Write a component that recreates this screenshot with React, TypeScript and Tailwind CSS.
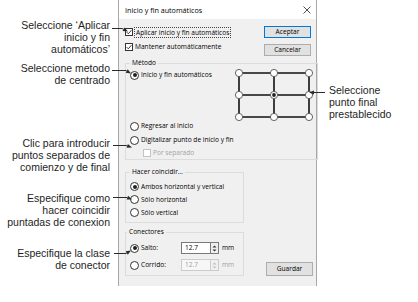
import React from "react";

type Pt = [number, number];

function Leader({ pts }: { pts: Pt[] }) {
  const [x2, y2] = pts[pts.length - 1];
  const [x1, y1] = pts[pts.length - 2];
  const dx = x2 - x1;
  const dy = y2 - y1;
  const len = Math.hypot(dx, dy) || 1;
  const ux = dx / len;
  const uy = dy / len;
  const L = 5;
  const W = 2;
  const bx = x2 - ux * L;
  const by = y2 - uy * L;
  const p1: Pt = [bx - uy * W, by + ux * W];
  const p2: Pt = [bx + uy * W, by - ux * W];
  const linePts: Pt[] = [...pts.slice(0, -1), [bx, by]];
  return (
    <g>
      <polyline
        points={linePts.map((p) => p.join(",")).join(" ")}
        fill="none"
        stroke="#2a2a2a"
        strokeWidth={1}
      />
      <polygon points={`${x2},${y2} ${p1.join(",")} ${p2.join(",")}`} fill="#2a2a2a" />
    </g>
  );
}

function Radio({ checked, disabled }: { checked?: boolean; disabled?: boolean }) {
  return (
    <span
      className={
        disabled
          ? "flex h-[9px] w-[9px] shrink-0 items-center justify-center rounded-full border border-[#bcbcbc] bg-white"
          : "flex h-[9px] w-[9px] shrink-0 items-center justify-center rounded-full border border-[#333333] bg-white"
      }
    >
      {checked && <span className="h-[4px] w-[4px] rounded-full bg-[#222222]" />}
    </span>
  );
}

function Check({ checked, disabled }: { checked?: boolean; disabled?: boolean }) {
  return (
    <span
      className={
        disabled
          ? "flex h-[8px] w-[8px] shrink-0 items-center justify-center border border-[#c4c4c4] bg-white"
          : "flex h-[8px] w-[8px] shrink-0 items-center justify-center border border-[#333333] bg-white"
      }
    >
      {checked && (
        <svg width="6" height="6" viewBox="0 0 6 6">
          <path d="M0.6 3.1 L2.3 4.8 L5.4 1.2" fill="none" stroke="#222" strokeWidth="0.9" />
        </svg>
      )}
    </span>
  );
}

function Spinner({ disabled }: { disabled?: boolean }) {
  const c = disabled ? "#bdbdbd" : "#333";
  return (
    <span
      className={
        disabled
          ? "flex h-[12px] w-[8px] flex-col items-center justify-center gap-[1px] border-y border-r border-[#cccccc] bg-[#f0f0f0]"
          : "flex h-[12px] w-[8px] flex-col items-center justify-center gap-[1px] border-y border-r border-[#7a7a7a] bg-[#f0f0f0]"
      }
    >
      <svg width="5" height="3" viewBox="0 0 5 3">
        <path d="M0.5 2.6 L2.5 0.4 L4.5 2.6 Z" fill={c} />
      </svg>
      <svg width="5" height="3" viewBox="0 0 5 3">
        <path d="M0.5 0.4 L2.5 2.6 L4.5 0.4 Z" fill={c} />
      </svg>
    </span>
  );
}

function Grid() {
  const xs = [5, 40, 75];
  const ys = [5, 27, 49];
  return (
    <svg width="80" height="54" viewBox="0 0 80 54" className="shrink-0">
      {ys.map((y) => (
        <line key={`h${y}`} x1={5} y1={y} x2={75} y2={y} stroke="#111" strokeWidth={1.6} />
      ))}
      {xs.map((x) => (
        <line key={`v${x}`} x1={x} y1={5} x2={x} y2={49} stroke="#111" strokeWidth={1.6} />
      ))}
      {ys.map((y) =>
        xs.map((x) => (
          <circle key={`c${x}-${y}`} cx={x} cy={y} r={3.6} fill="#fff" stroke="#555" strokeWidth={0.9} />
        ))
      )}
      <circle cx={40} cy={27} r={1.9} fill="#222" />
    </svg>
  );
}

export default function App() {
  return (
    <div className="relative flex h-[302px] w-[418px] overflow-hidden bg-white">
      {/* left annotations */}
      <div className="flex w-[118px] shrink-0 flex-col items-end whitespace-nowrap pr-[8px] text-right font-['Liberation_Sans',Arial,sans-serif] text-[10.5px] leading-[12px] text-[#1e1e1e]">
        <p className="mt-[19px]">
          Seleccione ‘Aplicar
          <br />
          inicio y fin
          <br />
          automáticos’
        </p>
        <p className="mt-[7px]">
          Seleccione metodo
          <br />
          de centrado
        </p>
        <p className="mt-[51px]">
          Clic para introducir
          <br />
          puntos separados de
          <br />
          comienzo y de final
        </p>
        <p className="mt-[19px]">
          Especifique como
          <br />
          hacer coincidir
          <br />
          puntadas de conexion
        </p>
        <p className="mt-[19px]">
          Especifique la clase
          <br />
          de conector
        </p>
      </div>

      {/* dialog */}
      <div className="flex h-[286px] w-[199px] shrink-0 flex-col whitespace-nowrap border-x border-[#a8a8a8] font-['Open_Sans','Noto_Sans',sans-serif] text-[6.6px] leading-[10px] text-black">
        <div className="flex h-[19px] shrink-0 items-center justify-between bg-white pl-[6px] pr-[5px]">
          <span className="text-[7.2px]">Inicio y fin automáticos</span>
          <svg width="8" height="8" viewBox="0 0 8 8">
            <path d="M0.5 0.5 L7.5 7.5 M7.5 0.5 L0.5 7.5" stroke="#222" strokeWidth="0.8" />
          </svg>
        </div>
        <div className="flex flex-1 flex-col bg-[#f0f0f0] pl-[6px] pr-[3px]">
          {/* top */}
          <div className="flex h-[39px] shrink-0 justify-between">
            <div className="flex flex-col gap-[3px] pt-[7px]">
              <div className="flex h-[12px] items-center">
                <Check checked />
                <span className="ml-[1px] border border-dotted border-[#444] px-[1px] leading-[9px]">
                  Aplicar inicio y fin automáticos
                </span>
              </div>
              <div className="flex h-[12px] items-center">
                <Check checked />
                <span className="ml-[2px]">Mantener automáticamente</span>
              </div>
            </div>
            <div className="mr-[2px] flex flex-col gap-[6px] pt-[7px]">
              <div className="flex h-[12px] w-[47px] items-center justify-center border border-[#0078d7] bg-[#e1e1e1]">
                Aceptar
              </div>
              <div className="flex h-[12px] w-[47px] items-center justify-center border border-[#adadad] bg-[#e1e1e1]">
                Cancelar
              </div>
            </div>
          </div>

          {/* Método */}
          <fieldset className="border border-[#dcdcdc]">
            <legend className="ml-[4px] px-[2px] leading-[10px]">Método</legend>
            <div className="flex">
              <div className="flex min-w-0 flex-1 flex-col pl-[4px]">
                <div className="flex h-[14px] items-center gap-[2px]">
                  <Radio checked />
                  <span>Inicio y fin automáticos</span>
                </div>
                <div className="mt-[37px] flex h-[14px] items-center gap-[2px]">
                  <Radio />
                  <span>Regresar al inicio</span>
                </div>
                <div className="flex h-[14px] items-center gap-[2px]">
                  <Radio />
                  <span>Digitalizar punto de inicio y fin</span>
                </div>
                <div className="flex h-[11px] items-center gap-[2px] pl-[13px] text-[#a3a3a3]">
                  <Check disabled />
                  <span>Por separado</span>
                </div>
                <div className="h-[1px]" />
              </div>
              <div className="mr-[3px]">
                <Grid />
              </div>
            </div>
          </fieldset>

          {/* Hacer coincidir */}
          <fieldset className="mt-[7px] w-[119px] border border-[#dcdcdc]">
            <legend className="ml-[4px] px-[2px] leading-[10px]">Hacer coincidir…</legend>
            <div className="flex flex-col pb-[3px] pl-[4px] pt-[3px]">
              <div className="flex h-[13px] items-center gap-[2px]">
                <Radio checked />
                <span>Ambos horizontal y vertical</span>
              </div>
              <div className="flex h-[13px] items-center gap-[2px]">
                <Radio />
                <span>Sólo horizontal</span>
              </div>
              <div className="flex h-[13px] items-center gap-[2px]">
                <Radio />
                <span>Sólo vertical</span>
              </div>
            </div>
          </fieldset>

          {/* Conectores + Guardar */}
          <div className="mt-[4px] flex items-end justify-between">
            <fieldset className="w-[119px] border border-[#dcdcdc]">
              <legend className="ml-[1px] px-[2px] leading-[10px]">Conectores</legend>
              <div className="flex flex-col gap-[3px] pb-[3px] pl-[4px] pt-[4px]">
                <div className="flex h-[14px] items-center">
                  <span className="flex w-[51px] items-center gap-[2px]">
                    <Radio checked />
                    <span>Salto:</span>
                  </span>
                  <span className="flex h-[12px] w-[30px] items-center border border-[#7a7a7a] bg-white pl-[3px]">
                    12.7
                  </span>
                  <Spinner />
                  <span className="ml-[3px]">mm</span>
                </div>
                <div className="flex h-[14px] items-center">
                  <span className="flex w-[51px] items-center gap-[2px]">
                    <Radio />
                    <span>Corrido:</span>
                  </span>
                  <span className="flex h-[12px] w-[30px] items-center border border-[#cccccc] bg-[#f7f7f7] pl-[3px] text-[#a0a0a0]">
                    12.7
                  </span>
                  <Spinner disabled />
                  <span className="ml-[3px] text-[#a0a0a0]">mm</span>
                </div>
              </div>
            </fieldset>
            <div className="flex h-[14px] w-[47px] items-center justify-center border border-[#adadad] bg-[#e1e1e1]">
              Guardar
            </div>
          </div>
        </div>
      </div>

      {/* right annotation */}
      <div className="flex-1 whitespace-nowrap pl-[12px] pt-[84px] font-['Liberation_Sans',Arial,sans-serif] text-[10.5px] leading-[12px] text-[#1e1e1e]">
        <p>
          Seleccione
          <br />
          punto final
          <br />
          prestablecido
        </p>
      </div>

      {/* leader lines overlay */}
      <svg
        className="pointer-events-none absolute left-0 top-0"
        width="418"
        height="302"
        viewBox="0 0 418 302"
      >
        <Leader pts={[[112, 28.5], [122, 28.5], [128, 31.5]]} />
        <Leader pts={[[112, 70.5], [126, 70.5], [131, 73.5]]} />
        <Leader pts={[[113, 145.5], [126, 145.5], [132, 147.5]]} />
        <Leader pts={[[113, 197.5], [127, 197.5], [132, 199.5]]} />
        <Leader pts={[[114, 253.5], [126, 253.5], [131, 250.5]]} />
        <Leader pts={[[325, 92.5], [309, 92.5]]} />
      </svg>
    </div>
  );
}
